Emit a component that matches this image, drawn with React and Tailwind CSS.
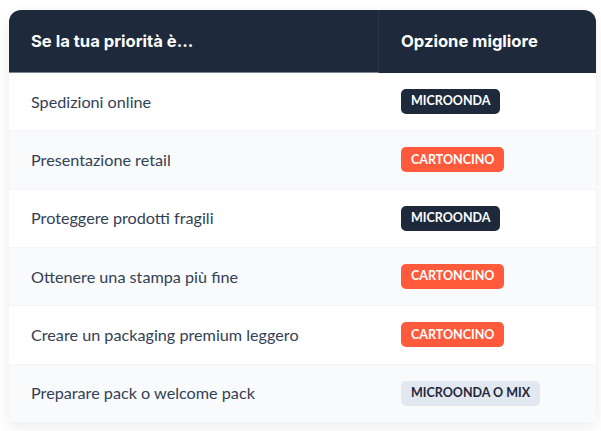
export default function App() {
  const rows = [
    ["Spedizioni online", "MICROONDA", "dark"],
    ["Presentazione retail", "CARTONCINO", "coral"],
    ["Proteggere prodotti fragili", "MICROONDA", "dark"],
    ["Ottenere una stampa più fine", "CARTONCINO", "coral"],
    ["Creare un packaging premium leggero", "CARTONCINO", "coral"],
    ["Preparare pack o welcome pack", "MICROONDA O MIX", "gray"],
  ];
  const badge = {
    dark: "bg-[#1e293b] text-white",
    coral: "bg-[#ff5a3c] text-white",
    gray: "bg-[#e2e8f0] text-[#1e293b]",
  };
  return (
    <div className="w-[601px] h-[431px] bg-white pt-[10px] pl-[9px]" style={{ fontFamily: "Lato, 'Noto Sans', sans-serif" }}>
      <div className="w-[587px] rounded-t-[12px] rounded-b-[4px] overflow-hidden shadow-[0_4px_14px_rgba(15,23,42,0.08)]">
        <div className="flex h-[63px] bg-[#1e293b] text-white">
          <div className="w-[370px] flex items-center pl-[22px] border-r border-[#2b3749] border-b border-b-[#7c8594] text-[16.6px] font-bold" style={{ fontFamily: "Inter, sans-serif" }}>
            Se la tua priorità è...
          </div>
          <div className="flex-1 flex items-center pl-[22px] text-[16.6px] font-bold" style={{ fontFamily: "Inter, sans-serif" }}>
            Opzione migliore
          </div>
        </div>
        {rows.map(([a, b, c], i) => (
          <div key={i} className={`flex h-[58.34px] border-b border-[#f1f5f9] ${i % 2 === 1 ? "bg-[#f8fafc]" : "bg-white"}`}>
            <div className="w-[370px] flex items-center pl-[22px] text-[16.2px] text-[#334155]">{a}</div>
            <div className="flex-1 flex items-center pl-[22px]">
              <span className={`h-[25px] px-[10px] rounded-[5px] flex items-center text-[12.5px] font-bold ${badge[c]}`}>{b}</span>
            </div>
          </div>
        ))}
      </div>
    </div>
  );
}
